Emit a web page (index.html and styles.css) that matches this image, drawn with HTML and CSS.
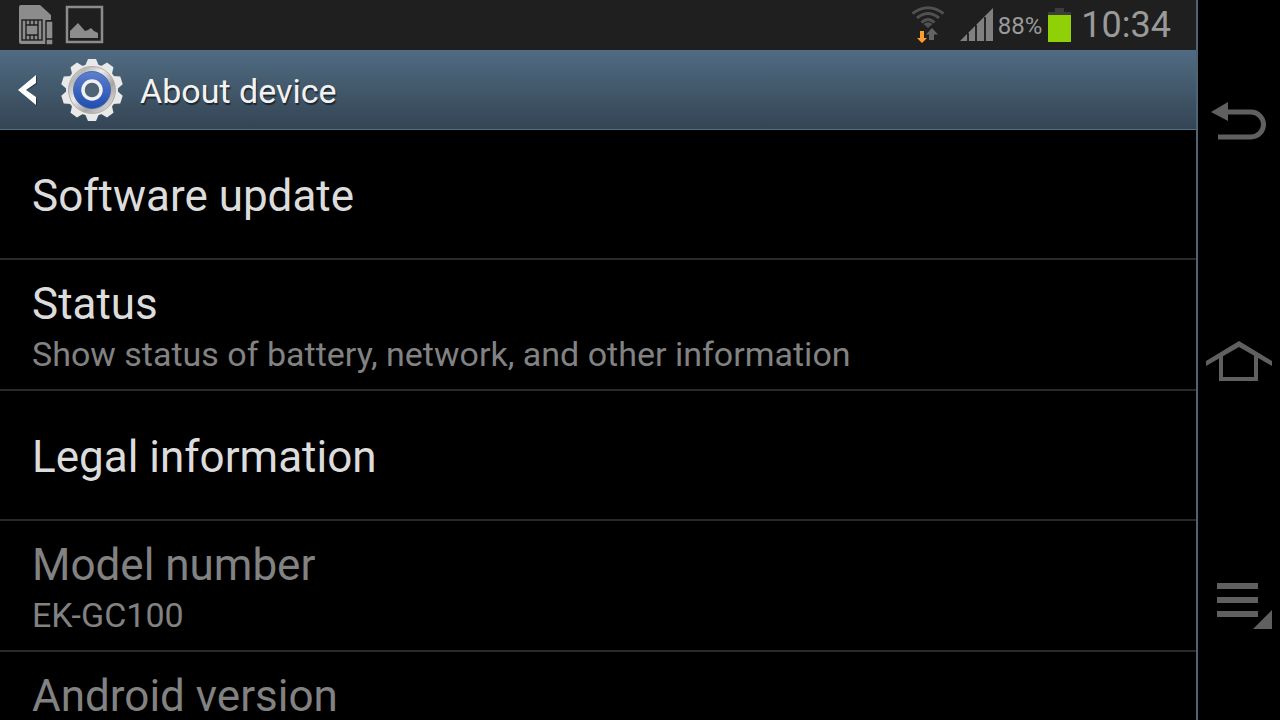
FILE: index.html
```
<!DOCTYPE html>
<html lang="en">
<head>
  <meta charset="UTF-8">
  <title>About device</title>
  <link rel="stylesheet" href="styles.css">
</head>
<body>
  <div class="screen">
    <div class="status-bar">
      <div class="notifications">
        <!-- SIM card -->
        <svg width="36" height="40" viewBox="0 0 36 40">
          <path fill="#8c8c8c" d="M3 0H22L33 10V15H28V39H3Q1 39 1 37V2Q1 0 3 0Z"/>
          <rect x="4" y="15" width="20" height="20" fill="none" stroke="#1f1f1f" stroke-width="1.4"/>
          <path fill="none" stroke="#1f1f1f" stroke-width="1.4" d="M8 15V35M20 15V35M8 20H20M8 30H20M12 15V20M16 15V20M12 30V35M16 30V35"/>
          <path fill="#8c8c8c" stroke="#1f1f1f" stroke-width="1.4" d="M28 16H35V34H28ZM28 34H35V40H28Z"/>
        </svg>
        <!-- Picture -->
        <svg width="38" height="38" viewBox="0 0 38 38">
          <rect x="1" y="1" width="35" height="35" fill="none" stroke="#8c8c8c" stroke-width="2.500"/>
          <path fill="#8c8c8c" d="M4 32V25L8 21L12 17L19 25L22 24L25 22L28 25L32 27V32Z"/>
        </svg>
      </div>
      <div class="indicators">
        <!-- Wi-Fi -->
        <svg class="wifi" width="34" height="38" viewBox="0 0 34 38">
          <g fill="none" stroke="#505050" stroke-width="3">
            <path d="M1.500 7.500Q17 -4 32.500 7.500"/>
            <path d="M6 12Q17 3 28 12"/>
            <path d="M10.500 16.500Q17 10.500 23.500 16.500"/>
          </g>
          <path fill="#505050" d="M12.500 18Q17 14.500 21.500 18L17 22Z"/>
          <path fill="#636363" d="M21 22L27 28.500H23V34H18V28.500H15Z"/>
          <path fill="#ff9d2b" d="M9 25H13V32H16L11 37L6 32H9Z"/>
        </svg>
        <!-- Signal -->
        <svg class="signal" width="34" height="34" viewBox="0 0 34 34">
          <path fill="#808080" d="M0 33L33 0V33Z"/>
          <path stroke="#080808" stroke-width="1.500" d="M8 25V33M16 17V33M25 9V33"/>
        </svg>
        <span class="percent">88%</span>
        <!-- Battery -->
        <svg class="battery" width="23" height="36" viewBox="0 0 23 36">
          <path fill="#3c3c3c" d="M7 1H16V5H23V9H0V5H7Z"/>
          <rect y="8" width="23" height="27" fill="#8fd006"/>
        </svg>
        <span class="clock">10:34</span>
      </div>
    </div>

    <header class="action-bar">
      <button class="up" aria-label="Back">
        <svg width="20" height="32" viewBox="0 0 20 32">
          <path fill="#17212b" opacity="0.6" d="M19 2V10L8 17L19 25V32L1 17Z"/>
          <path fill="#fff" d="M18 1V9L8 16L18 23V31L0 16Z"/>
        </svg>
      </button>
      <!-- Settings gear -->
      <svg class="gear" width="64" height="64" viewBox="-32 -32 64 64">
        <defs>
          <linearGradient id="metal" x1="0" y1="0" x2="1" y2="1">
            <stop offset="0" stop-color="#f4f4f4"/>
            <stop offset="0.2" stop-color="#b8b8b8"/>
            <stop offset="0.4" stop-color="#ececec"/>
            <stop offset="0.65" stop-color="#a4a4a4"/>
            <stop offset="1" stop-color="#f2f2f2"/>
          </linearGradient>
          <linearGradient id="blue" x1="0" y1="0" x2="0" y2="1">
            <stop offset="0" stop-color="#5d80ce"/>
            <stop offset="1" stop-color="#1f4db0"/>
          </linearGradient>
          <path id="tooth" d="M-7 -24L-4 -31H4L7 -24Z"/>
        </defs>
        <g fill="#e9e9e9">
          <circle r="26"/>
          <use href="#tooth"/>
          <use href="#tooth" transform="rotate(36)"/>
          <use href="#tooth" transform="rotate(72)"/>
          <use href="#tooth" transform="rotate(108)"/>
          <use href="#tooth" transform="rotate(144)"/>
          <use href="#tooth" transform="rotate(180)"/>
          <use href="#tooth" transform="rotate(216)"/>
          <use href="#tooth" transform="rotate(252)"/>
          <use href="#tooth" transform="rotate(288)"/>
          <use href="#tooth" transform="rotate(324)"/>
        </g>
        <circle r="23.500" fill="url(#metal)" stroke="#b5aca6"/>
        <circle r="18.500" fill="url(#blue)" stroke="#3c5da6" stroke-width="0.800"/>
        <circle r="9" fill="#4e6376" stroke="#f0f0f0" stroke-width="3.500"/>
      </svg>
      <h1>About device</h1>
    </header>

    <ul class="settings">
      <li><button class="item"><span class="title">Software update</span></button></li>
      <li>
        <button class="item">
          <span class="title">Status</span>
          <span class="summary">Show status of battery, network, and other information</span>
        </button>
      </li>
      <li><button class="item"><span class="title">Legal information</span></button></li>
      <li>
        <div class="item disabled">
          <span class="title">Model number</span>
          <span class="summary">EK-GC100</span>
        </div>
      </li>
      <li>
        <div class="item disabled">
          <span class="title">Android version</span>
        </div>
      </li>
    </ul>
  </div>

  <nav class="keys">
    <button aria-label="Back">
      <svg width="66" height="48" viewBox="0 0 66 48">
        <path fill="none" stroke="#606060" stroke-width="5" d="M20 16H45A12.500 12.500 0 0 1 45 41H12"/>
        <path fill="#606060" d="M5 16L22 6V25Z"/>
      </svg>
    </button>
    <button aria-label="Home">
      <svg width="66" height="48" viewBox="0 0 66 48">
        <path fill="none" stroke="#606060" stroke-width="4" d="M15 18V43H50V18"/>
        <path fill="#606060" d="M0 25L33 5L66 25V30L33 11L0 30Z"/>
      </svg>
    </button>
    <button aria-label="Menu">
      <svg width="66" height="60" viewBox="0 0 66 60">
        <path fill="#606060" d="M11 13H52V19H11ZM11 27H52V33H11ZM11 41H52V47H11ZM66 40V59H47Z"/>
      </svg>
    </button>
  </nav>
</body>
</html>
```
FILE: styles.css
```
* { box-sizing: border-box; }
body {
  margin: 0;
  height: 100vh;
  display: flex;
  overflow: hidden;
  background: #000;
  color: #dcdcdc;
  font-family: Roboto, "Noto Sans", sans-serif;
}
button {
  margin: 0;
  padding: 0;
  border: 0;
  background: none;
  color: inherit;
  font: inherit;
  text-align: left;
}
svg { display: block; flex: none; overflow: visible; }

.screen {
  flex: 1;
  min-width: 0;
  display: flex;
  flex-direction: column;
  border-right: 2px solid #4b6576;
  overflow: hidden;
}

/* --- STATUS BAR --- */
.status-bar {
  flex: none;
  height: 50px;
  padding: 0 25px 0 18px;
  display: flex;
  align-items: center;
  justify-content: space-between;
  background: #1f1f1f;
  color: #9a9a9a;
}
.notifications, .indicators { display: flex; align-items: center; }
.notifications { gap: 12px; }
.signal { margin: 0 4px 0 15px; }
.percent { font-size: 24px; line-height: 28px; padding-top: 2px; }
.battery { margin: 0 10px 0 6px; }
.clock { font-size: 36px; }

/* --- ACTION BAR --- */
.action-bar {
  flex: none;
  height: 80px;
  padding-left: 18px;
  display: flex;
  align-items: center;
  background: linear-gradient(#506c82, #344454);
  border-bottom: 1px solid #507080;
}
.gear { margin: 0 16px 0 22px; }
h1 {
  margin: 0;
  padding-top: 2px;
  font-size: 34px;
  font-weight: 400;
  line-height: 40px;
  color: #f2f2f2;
  text-shadow: 1px 2px 1px #1c2733;
}

/* --- LIST --- */
.settings {
  margin: 0;
  padding: 0;
  list-style: none;
}
.settings li { border-bottom: 2px solid #292929; }
.item {
  width: 100%;
  min-height: 128px;
  padding: 16px 32px 12px;
  display: flex;
  flex-direction: column;
  justify-content: center;
}
.title { font-size: 44px; line-height: 56px; }
.summary { font-size: 34px; line-height: 45px; color: #828282; }
.disabled { color: #828282; }
.settings li:last-child .item { justify-content: flex-start; }

/* --- KEYS --- */
.keys {
  width: 82px;
  display: flex;
  flex-direction: column;
}
.keys button {
  flex: 1;
  display: flex;
  align-items: center;
  justify-content: center;
}
```
